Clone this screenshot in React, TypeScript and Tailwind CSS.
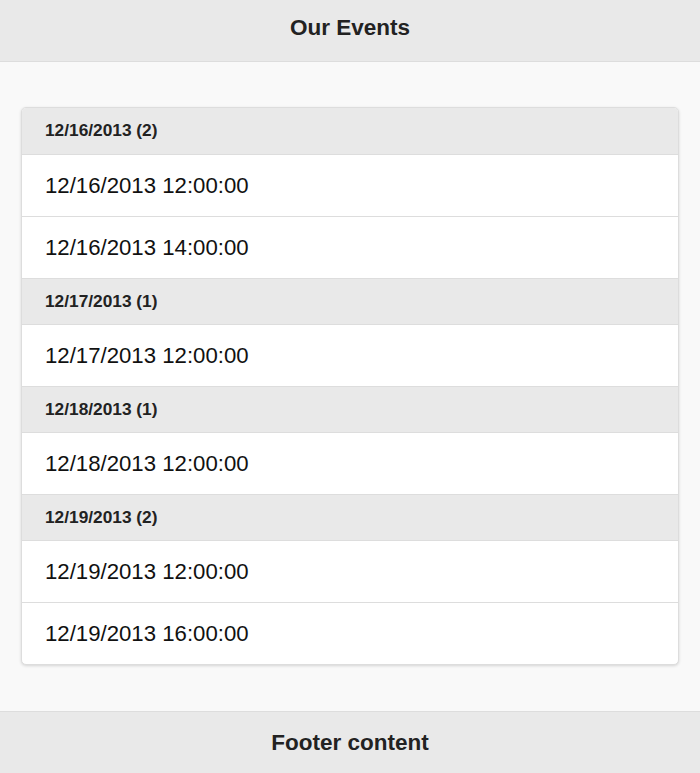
import React from 'react';

const groups = [
  { date: '12/16/2013', events: ['12/16/2013 12:00:00', '12/16/2013 14:00:00'] },
  { date: '12/17/2013', events: ['12/17/2013 12:00:00'] },
  { date: '12/18/2013', events: ['12/18/2013 12:00:00'] },
  { date: '12/19/2013', events: ['12/19/2013 12:00:00', '12/19/2013 16:00:00'] }
];

export default function App() {
  return (
    <div
      className="min-h-screen flex flex-col bg-[#f9f9f9] text-[#333]"
      style={{ fontFamily: '"Liberation Sans", Arial, sans-serif' }}
    >
      <header className="h-[62px] shrink-0 flex items-center justify-center pb-[5px] bg-[#e9e9e9] border-b border-[#ddd]">
        <h1 className="text-[22.5px] font-bold text-[#222]">Our Events</h1>
      </header>

      <main className="flex-1 px-[21px] pt-[45px] pb-[45px]">
        <ul className="bg-white border border-[#ddd] rounded-[5px] overflow-hidden shadow-[0_1px_3px_rgba(0,0,0,0.15)]">
          {groups.map((group, gi) => (
            <React.Fragment key={group.date}>
              <li
                className={`h-[46px] flex items-center pl-[23px] bg-[#e9e9e9] text-[17.3px] font-bold text-[#222] ${
                  gi > 0 ? 'border-t border-[#ddd]' : ''
                }`}
              >
                {group.date} ({group.events.length})
              </li>
              {group.events.map(ev => (
                <li
                  key={ev}
                  className="h-[62px] flex items-center pl-[23px] border-t border-[#ddd] text-[22.2px] text-[#111]"
                >
                  {ev}
                </li>
              ))}
            </React.Fragment>
          ))}
        </ul>
      </main>

      <footer className="h-[62px] shrink-0 flex items-center justify-center bg-[#e9e9e9] border-t border-[#ddd]">
        <h4 className="text-[22.5px] font-bold text-[#222]">Footer content</h4>
      </footer>
    </div>
  );
}
